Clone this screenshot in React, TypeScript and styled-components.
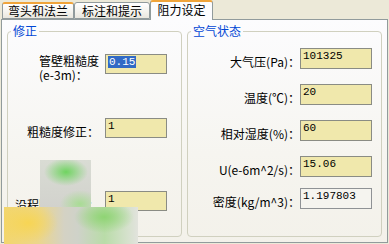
import * as React from "react";
import styled, { createGlobalStyle } from "styled-components";

const GlobalStyle = createGlobalStyle`
  html, body {
    margin: 0;
    padding: 0;
    background: #ece9d8;
    overflow: hidden;
  }
  body {
    font-family: "Noto Sans CJK SC", "Liberation Sans", sans-serif;
    font-size: 12px;
    color: #000;
  }
`;

const SWindow = styled.div`
  position: relative;
  width: 389px;
  height: 244px;
  box-sizing: border-box;
  padding: 0 1px 1px 1px;
  display: flex;
  flex-direction: column;
  background: #ece9d8;
`;

const STabBar = styled.div`
  height: 19px;
  display: flex;
  align-items: flex-end;
  padding-left: 1px;
  position: relative;
  z-index: 2;
`;

const STab = styled.div<{ $width: number; $active?: boolean; $hot?: boolean }>`
  width: ${p => p.$width}px;
  height: ${p => (p.$active ? 20 : 17)}px;
  box-sizing: border-box;
  margin-bottom: ${p => (p.$active ? -1 : 0)}px;
  border: 1px solid #919b9c;
  border-bottom: ${p => (p.$active ? "none" : "1px solid #919b9c")};
  border-top: ${p => (p.$active || p.$hot ? "2px solid #f0a43a" : "1px solid #919b9c")};
  border-radius: 3px 3px 0 0;
  background: ${p =>
    p.$active ? "#fcfcfe" : "linear-gradient(#ffffff, #f3f2ec 60%, #e9e7de)"};
  display: flex;
  align-items: center;
  justify-content: center;
  line-height: 12px;
  padding-bottom: ${p => (p.$active ? 2 : 0)}px;
  white-space: nowrap;
`;

const SPanel = styled.div`
  flex: 1;
  box-sizing: border-box;
  border: 1px solid #919b9c;
  background: linear-gradient(#fcfcfe, #f6f5f0 60%, #f3f1ea);
  display: flex;
  gap: 5px;
  padding: 5px;
`;

const SGroup = styled.fieldset<{ $width?: number }>`
  margin: 0;
  padding: 0;
  min-width: 0;
  box-sizing: border-box;
  ${p => (p.$width ? `width: ${p.$width}px;` : "flex: 1;")}
  border: 1px solid #d0d0bf;
  border-radius: 4px;
  display: flex;
  flex-direction: column;
`;

const SLegend = styled.legend`
  margin-left: 3px;
  padding: 0 2px;
  line-height: 12px;
  font-size: 12px;
  color: #0046d5;
`;

const SRow = styled.div<{ $mt: number; $labelWidth: number; $inputWidth: number; $gap: number }>`
  margin-top: ${p => p.$mt}px;
  display: grid;
  grid-template-columns: ${p => p.$labelWidth}px ${p => p.$inputWidth}px;
  column-gap: ${p => p.$gap}px;
  align-items: start;
`;

const SLabel = styled.div<{ $dy: number; $pull?: number }>`
  justify-self: end;
  padding-top: ${p => p.$dy}px;
  margin-right: ${p => -(p.$pull || 0)}px;
  line-height: 14px;
  white-space: nowrap;
  text-align: left;
`;

const SInput = styled.div<{ $height: number; $readOnly?: boolean }>`
  height: ${p => p.$height}px;
  box-sizing: border-box;
  border: 1px solid ${p => (p.$readOnly ? "#8f9295" : "#8a8c84")};
  background: ${p => (p.$readOnly ? "#f5f4ef" : "#f0e8ac")};
  font-family: "Liberation Mono", "DejaVu Sans Mono", monospace;
  font-size: 11px;
  line-height: 12px;
  padding: 1px 0 0 2px;
  white-space: nowrap;
`;

const SSelected = styled.span`
  background: #316ac5;
  color: #fff;
  display: inline-block;
  padding: 0 1px;
`;

const SBlurBox = styled.div<{ $left: number; $top: number; $w: number; $h: number; $bg: string }>`
  position: absolute;
  left: ${p => p.$left}px;
  top: ${p => p.$top}px;
  width: ${p => p.$w}px;
  height: ${p => p.$h}px;
  background: ${p => p.$bg};
  z-index: 5;
`;

const leftRows = [
  { mt: 17, dy: 0, label: ["管壁粗糙度", "(e-3m)："], value: "0.15", selected: true },
  { mt: 36, dy: 7, label: ["粗糙度修正："], value: "1" },
  { mt: 52, dy: 7, label: ["沿程阻力系数："], value: "1" },
];

const rightRows = [
  { mt: 11, label: "大气压(Pa)：", value: "101325" },
  { mt: 15, label: "温度(℃)：", value: "20" },
  { mt: 15, label: "相对湿度(%)：", value: "60" },
  { mt: 15, label: "U(e-6m^2/s)：", value: "15.06" },
  { mt: 11, label: "密度(kg/m^3)：", value: "1.197803", readOnly: true },
];

const App = () => (
  <SWindow>
    <GlobalStyle />
    <STabBar>
      <STab $width={72} $hot>弯头和法兰</STab>
      <STab $width={76}>标注和提示</STab>
      <STab $width={63} $active>阻力设定</STab>
    </STabBar>
    <SPanel>
      <SGroup $width={175}>
        <SLegend>修正</SLegend>
        {leftRows.map(r => (
          <SRow key={r.value + r.mt} $mt={r.mt} $labelWidth={91} $inputWidth={62} $gap={6}>
            <SLabel $dy={r.dy}>
              {r.label.map((l, i) => (
                <React.Fragment key={l}>
                  {i > 0 && <br />}
                  {l}
                </React.Fragment>
              ))}
            </SLabel>
            <SInput $height={20}>{r.selected ? <SSelected>{r.value}</SSelected> : r.value}</SInput>
          </SRow>
        ))}
      </SGroup>
      <SGroup>
        <SLegend>空气状态</SLegend>
        {rightRows.map(r => (
          <SRow key={r.label} $mt={r.mt} $labelWidth={109} $inputWidth={72} $gap={3}>
            <SLabel $dy={7} $pull={3}>{r.label}</SLabel>
            <SInput $height={21} $readOnly={r.readOnly}>
              {r.value}
            </SInput>
          </SRow>
        ))}
      </SGroup>
    </SPanel>
    {/* blurred watermark over the bottom-left corner */}
    <SBlurBox
      $left={40}
      $top={160}
      $w={51}
      $h={47}
      $bg="radial-gradient(ellipse 22px 14px at 26px 12px, #6fd460, rgba(120,210,100,0) 100%), radial-gradient(ellipse 20px 14px at 40px 44px, #a8dc94, rgba(160,220,140,0) 100%), linear-gradient(#d9dcd4, #d2d2cd)"
    />
    <SBlurBox
      $left={4}
      $top={207}
      $w={134}
      $h={37}
      $bg="radial-gradient(ellipse 30px 20px at 24px 16px, #f7d554, rgba(247,213,84,0) 100%), radial-gradient(ellipse 30px 16px at 100px 10px, #8fd474, rgba(143,212,116,0) 100%), linear-gradient(90deg, #f3d66c 0%, #ecd68a 25%, #d4d2c4 45%, #cfd2c9 55%, #b9dca8 75%, #e2e3dd 100%)"
    />
  </SWindow>
);

export default App;
